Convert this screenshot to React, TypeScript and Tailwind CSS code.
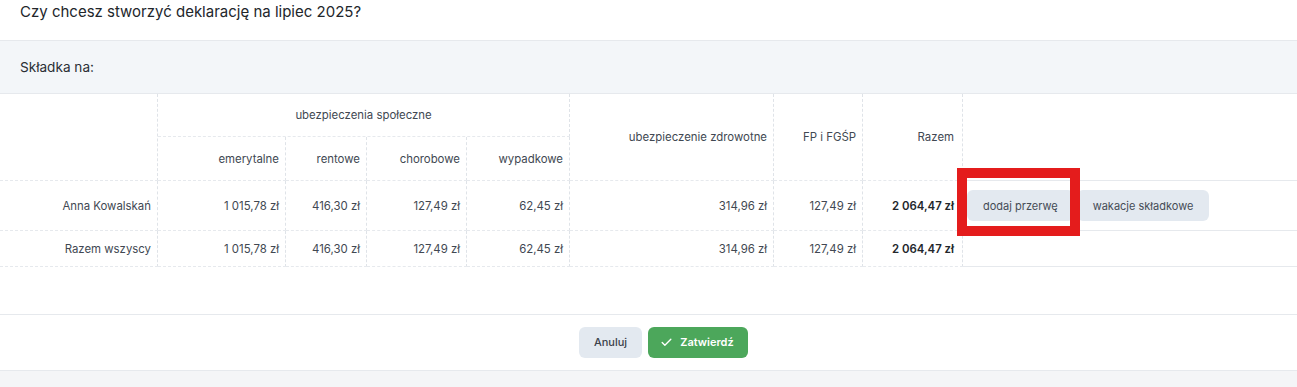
import React from "react";
import { Check } from "lucide-react";

const NB = "\u00A0";

const rows = [
  {
    name: "Anna Kowalskań",
    vals: [`1${NB}015,78 zł`, "416,30 zł", "127,49 zł", "62,45 zł", "314,96 zł", "127,49 zł"],
    total: `2${NB}064,47 zł`,
    actions: true,
    h: "h-[50px]",
  },
  {
    name: "Razem wszyscy",
    vals: [`1${NB}015,78 zł`, "416,30 zł", "127,49 zł", "62,45 zł", "314,96 zł", "127,49 zł"],
    total: `2${NB}064,47 zł`,
    actions: false,
    h: "h-[36px]",
  },
];

const vline = "border-r border-dashed border-r-[#dfe3e8]";
const hline = "border-b border-b-[#e6e9ed]";

export default function App() {
  return (
    <div
      className="relative w-[1297px] h-[387px] bg-white overflow-hidden text-[#414852]"
      style={{ fontFamily: "Inter, 'Noto Sans', sans-serif" }}
    >
      <div className="h-10 px-5 text-[15px] leading-6 text-[#22262b]">
        Czy chcesz stworzyć deklarację na lipiec 2025?
      </div>
      <div className="border-y border-[#e6e9ed] bg-[#f3f6f9] px-5 py-4 text-[13.6px] leading-5 text-[#2a2f35]">
        Składka na:
      </div>
      <table className="table-fixed border-separate border-spacing-0 w-[1297px] text-[11.4px] leading-4">
        <colgroup>
          <col className="w-[158px]" />
          <col className="w-[128px]" />
          <col className="w-[81px]" />
          <col className="w-[100px]" />
          <col className="w-[103px]" />
          <col className="w-[204px]" />
          <col className="w-[89px]" />
          <col className="w-[100px]" />
          <col className="w-[334px]" />
        </colgroup>
        <thead>
          <tr className="h-[43px]">
            <th rowSpan={2} className={`${vline} ${hline}`}></th>
            <th colSpan={4} className={`${vline} ${hline} font-normal text-center align-middle`}>
              ubezpieczenia społeczne
            </th>
            <th rowSpan={2} className={`${vline} ${hline} font-normal text-right pr-1.5 align-middle`}>
              ubezpieczenie zdrowotne
            </th>
            <th rowSpan={2} className={`${vline} ${hline} font-normal text-right pr-1.5 align-middle`}>
              FP i FGŚP
            </th>
            <th rowSpan={2} className={`${vline} ${hline} font-normal text-right pr-2 align-middle`}>
              Razem
            </th>
            <th rowSpan={2} className={`${hline}`}></th>
          </tr>
          <tr className="h-[44px]">
            <th className={`${vline} ${hline} font-normal text-right pr-1.5`}>emerytalne</th>
            <th className={`${vline} ${hline} font-normal text-right pr-1.5`}>rentowe</th>
            <th className={`${vline} ${hline} font-normal text-right pr-1.5`}>chorobowe</th>
            <th className={`${vline} ${hline} font-normal text-right pr-1.5`}>wypadkowe</th>
          </tr>
        </thead>
        <tbody>
          {rows.map((r) => (
            <tr key={r.name} className={r.h}>
              <td className={`${vline} ${hline} text-right pr-1.5`}>{r.name}</td>
              {r.vals.map((v, i) => (
                <td key={i} className={`${vline} ${hline} text-right pr-1.5`}>
                  {v}
                </td>
              ))}
              <td className={`${vline} ${hline} text-right pr-2 font-semibold text-[#23272c]`}>
                {r.total}
              </td>
              <td className={`${hline} pl-1`}>
                {r.actions && (
                  <div className="flex items-center gap-[3px]">
                    <button className="h-[31px] px-4 rounded-md bg-[#e3e9f0] text-[11px] text-[#454c56]">
                      dodaj przerwę
                    </button>
                    <button className="h-[31px] px-4 rounded-md bg-[#e3e9f0] text-[11px] text-[#454c56]">
                      wakacje składkowe
                    </button>
                  </div>
                )}
              </td>
            </tr>
          ))}
        </tbody>
      </table>
      <div className="h-[47px]"></div>
      <div className="border-y border-[#e6e9ed] py-3 flex justify-center pl-[30px] gap-1.5">
        <button className="h-[31px] w-[63px] rounded-md bg-[#e3e9f0] text-[11px] font-medium text-[#3b424b]">
          Anuluj
        </button>
        <button className="h-[31px] w-[100px] rounded-md bg-[#4ca75b] text-[11px] font-semibold text-white flex items-center justify-center gap-[7px] pr-[2px]">
          <Check size={13} strokeWidth={2.5} />
          Zatwierdź
        </button>
      </div>
      <div className="h-5 bg-[#f4f5f7]"></div>
      <div className="absolute left-[957px] top-[168px] w-[123px] h-[68px] border-[10px] border-[#e41c1c]"></div>
    </div>
  );
}
